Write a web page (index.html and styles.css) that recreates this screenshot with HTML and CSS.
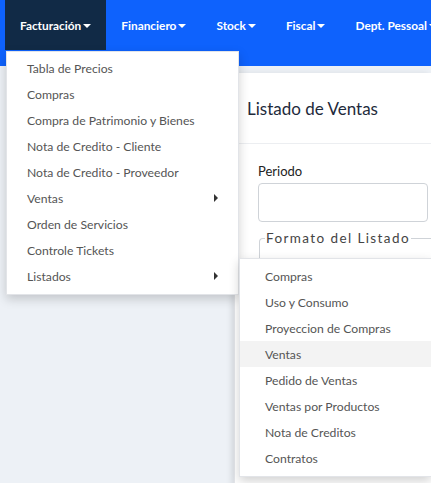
FILE: index.html
```html
<!DOCTYPE html>
<html>
<head>
<meta charset="utf-8">
<link rel="stylesheet" href="styles.css">
</head>
<body>
<nav class="navbar">
  <ul class="nav">
    <li class="nav-item active">
      <a class="nav-link">Facturación<span class="caret"></span></a>
      <ul class="dropdown">
        <li><a>Tabla de Precios</a></li>
        <li><a>Compras</a></li>
        <li><a>Compra de Patrimonio y Bienes</a></li>
        <li><a>Nota de Credito - Cliente</a></li>
        <li><a>Nota de Credito - Proveedor</a></li>
        <li class="has-sub"><a>Ventas<span class="rcaret"></span></a></li>
        <li><a>Orden de Servicios</a></li>
        <li><a>Controle Tickets</a></li>
        <li class="has-sub open"><a>Listados<span class="rcaret"></span></a>
          <ul class="submenu">
            <li><a>Compras</a></li>
            <li><a>Uso y Consumo</a></li>
            <li><a>Proyeccion de Compras</a></li>
            <li class="hover"><a>Ventas</a></li>
            <li><a>Pedido de Ventas</a></li>
            <li><a>Ventas por Productos</a></li>
            <li><a>Nota de Creditos</a></li>
            <li><a>Contratos</a></li>
          </ul>
        </li>
      </ul>
    </li>
    <li class="nav-item"><a class="nav-link">Financiero<span class="caret"></span></a></li>
    <li class="nav-item"><a class="nav-link">Stock<span class="caret"></span></a></li>
    <li class="nav-item"><a class="nav-link">Fiscal<span class="caret"></span></a></li>
    <li class="nav-item"><a class="nav-link">Dept. Pessoal<span class="caret"></span></a></li>
  </ul>
</nav>
<div class="layout">
  <aside class="sidebar"></aside>
  <main class="card">
    <div class="card-header">Listado de Ventas</div>
    <div class="card-body">
      <label class="label">Periodo</label>
      <div class="input"></div>
      <fieldset class="fieldset">
        <legend>Formato del Listado</legend>
      </fieldset>
    </div>
  </main>
</div>
</body>
</html>
```

FILE: styles.css
```css
* { box-sizing: border-box; }
html, body { margin: 0; padding: 0; }
body {
  width: 431px;
  height: 483px;
  overflow: hidden;
  background: #edf1f6;
  font-family: Lato, "Open Sans", sans-serif;
}
ul { list-style: none; margin: 0; padding: 0; }
a { text-decoration: none; cursor: default; }

.navbar {
  background: #0e62fd;
  height: 66px;
  padding-left: 5px;
  overflow: visible;
}
.nav { display: flex; height: 50px; white-space: nowrap; }
.nav-item { position: relative; }
.nav-item:last-child { overflow: hidden; }
.nav-link {
  display: flex;
  align-items: center;
  height: 50px;
  padding: 0 15px;
  color: #fff;
  font-size: 11.85px;
  font-weight: 700;
}
.nav-item.active > .nav-link { background: #112a46; }
.caret {
  display: inline-block;
  width: 0; height: 0;
  margin-left: 2px;
  margin-top: 1px;
  border-left: 4px solid transparent;
  border-right: 4px solid transparent;
  border-top: 4px solid #fff;
}

.dropdown {
  position: absolute;
  z-index: 10;
  top: 51px;
  left: 1px;
  width: 233px;
  background: #fff;
  padding: 3px 0 5px;
  border: 1px solid #e2e4e8;
  box-shadow: 0 4px 10px rgba(0,0,0,0.18);
}
.dropdown li { position: relative; }
.dropdown a {
  display: flex;
  align-items: center;
  justify-content: space-between;
  height: 26px;
  padding: 0 20px;
  color: #555;
  font-size: 12.2px;
}
.rcaret {
  width: 0; height: 0;
  border-top: 4px solid transparent;
  border-bottom: 4px solid transparent;
  border-left: 4px solid #333;
}
.submenu {
  position: absolute;
  top: -5px;
  left: 232px;
  width: 192px;
  background: #fff;
  padding: 4px 0 5px;
  border: 1px solid #e2e4e8;
  border-right: none;
  box-shadow: 0 4px 10px rgba(0,0,0,0.18);
}
.submenu a { padding: 0 25px; }
.submenu li.hover a { background: #f3f3f3; }

.layout { display: flex; }
.sidebar { width: 234px; flex: none; }
.card {
  flex: 1;
  margin-top: 7px;
  height: 420px;
  background: #fff;
  box-shadow: -3px 0 6px rgba(0,0,0,0.08);
  border-left: 1px solid #e4e6ea;
  overflow: hidden;
}
.card-header {
  height: 71px;
  display: flex;
  align-items: center;
  padding-left: 12px;
  font-size: 17px;
  color: #1e2a3b;
  border-bottom: 1px solid #eceef1;
}
.card-body { padding: 19px 0 0 23px; }
.label {
  display: block;
  font-size: 13px;
  color: #222;
  margin-bottom: 4px;
}
.input {
  width: 170px;
  height: 39px;
  border: 1px solid #cfd3d8;
  border-radius: 4px;
}
.fieldset {
  margin: 8px 0 0 1px;
  padding: 0;
  height: 80px;
  border: 1px solid #cfd3d8;
  border-right: none;
  border-radius: 4px 0 0 0;
}
.fieldset legend {
  margin-left: 5px;
  padding: 0 1px;
  font-size: 13.5px;
  font-weight: 400;
  letter-spacing: 1.4px;
  color: #444;
}
```
